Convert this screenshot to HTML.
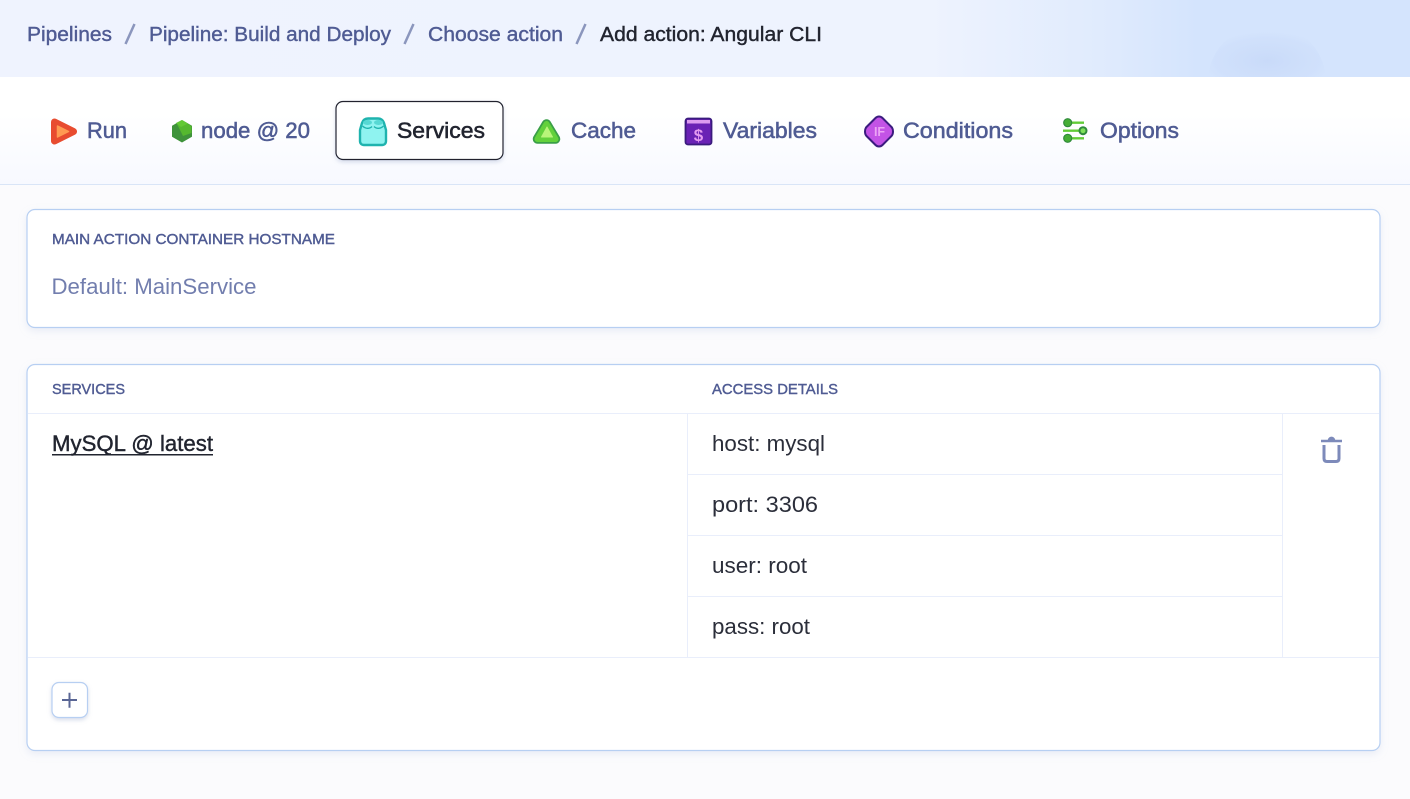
<!DOCTYPE html>
<html lang="en">
<head>
<meta charset="utf-8">
<title>Add action: Angular CLI</title>
<style>
html,body{margin:0;padding:0;width:1410px;height:799px;overflow:hidden;background:#fbfbfd}
svg{display:block}
text{font-family:"Liberation Sans",Arial,sans-serif}
.m{stroke-width:.4px;paint-order:stroke}
.nav{font-size:20.500px;fill:#4f5b93;stroke:#4f5b93}
.tab{font-size:22.500px;fill:#4f5b93;stroke:#4f5b93;stroke-width:.55px}
.cap{font-size:14.500px;fill:#4f5b93;stroke:#4f5b93}
.val{font-size:22px;fill:#2b2e3a}
</style>
</head>
<body>
<svg width="1410" height="799" viewBox="0 0 1410 799" xmlns="http://www.w3.org/2000/svg">
<defs>
<linearGradient id="hd" x1="0" y1="0" x2="1" y2="0">
<stop offset="0" stop-color="#eff3fe"/><stop offset=".66" stop-color="#eef3fe"/><stop offset=".78" stop-color="#e0ebfd"/><stop offset=".85" stop-color="#d4e4fd"/><stop offset="1" stop-color="#d4e4fd"/>
</linearGradient>
<linearGradient id="tb" x1="0" y1="0" x2="0" y2="1">
<stop offset="0" stop-color="#ffffff"/><stop offset=".35" stop-color="#ffffff"/><stop offset="1" stop-color="#f7f9ff"/>
</linearGradient>
<filter id="sh" x="-5%" y="-5%" width="110%" height="115%"><feDropShadow dx="0" dy="3" stdDeviation="4" flood-color="#a9b8dc" flood-opacity=".22"/></filter>
<filter id="sh2" x="-20%" y="-20%" width="140%" height="150%"><feDropShadow dx="0" dy="2" stdDeviation="2" flood-color="#8f9cc4" flood-opacity=".35"/></filter>
<radialGradient id="dot" cx=".5" cy=".7" r=".6"><stop offset="0" stop-color="#bfd2f5" stop-opacity=".55"/><stop offset=".75" stop-color="#c8d9f8" stop-opacity=".3"/><stop offset="1" stop-color="#d4e4fd" stop-opacity="0"/></radialGradient>
</defs>

<rect width="1410" height="799" fill="#fbfbfd"/>

<!-- breadcrumb header -->
<rect width="1410" height="77" fill="url(#hd)"/>
<path d="M1208 77C1212 42 1240 24 1268 24C1296 24 1322 44 1326 77Z" fill="url(#dot)"/>
<text x="27" y="41" class="nav m" textLength="85" lengthAdjust="spacingAndGlyphs">Pipelines</text>
<path d="M125.500 44L134.500 24" stroke="#8b96bd" stroke-width="2.500" fill="none"/>
<text x="149" y="41" class="nav m" textLength="242" lengthAdjust="spacingAndGlyphs">Pipeline: Build and Deploy</text>
<path d="M404.500 44L413.500 24" stroke="#8b96bd" stroke-width="2.500" fill="none"/>
<text x="428" y="41" class="nav m" textLength="135" lengthAdjust="spacingAndGlyphs">Choose action</text>
<path d="M576.500 44L585.500 24" stroke="#8b96bd" stroke-width="2.500" fill="none"/>
<text x="600" y="41" font-size="20.500" fill="#21242f" stroke="#21242f" class="m" textLength="222" lengthAdjust="spacingAndGlyphs">Add action: Angular CLI</text>

<!-- tabs -->
<rect y="77" width="1410" height="107" fill="url(#tb)"/>
<rect y="184" width="1410" height="1" fill="#d9e5f7"/>

<!-- Run -->
<path d="M54.500 122L73.500 131.500L54.500 141Z" fill="#e84c30" stroke="#e84c30" stroke-width="7" stroke-linejoin="round"/>
<path d="M57.500 126L68.500 131.500L57.500 137Z" fill="#ff9a52" stroke="#ff9a52" stroke-width="1.500" stroke-linejoin="round"/>
<text x="87" y="138" class="tab m" textLength="40" lengthAdjust="spacingAndGlyphs">Run</text>

<!-- node -->
<path d="M182 120.500L191.500 126V136.500L182 142L172.500 136.500V126Z" fill="#3f933b" stroke="#3f933b" stroke-width="1" stroke-linejoin="round"/>
<path d="M182 120.500L191.500 126V133L183 136L177 124Z" fill="#55b82f"/>
<path d="M176 123L182 120L188 123.500L181 127Z" fill="#62c934"/>
<text x="201" y="138" class="tab m" textLength="109" lengthAdjust="spacingAndGlyphs">node @ 20</text>

<!-- Services -->
<rect x="336" y="101.500" width="167" height="58" rx="7" fill="#fff" stroke="#21242f" stroke-width="1.200" filter="url(#sh2)"/>
<path d="M368 118.500H378C381 118.500 383 120 384 123L386 130V141C386 143.500 384.500 145 382 145H364C361.500 145 360 143.500 360 141V130L362 123C363 120 365 118.500 368 118.500Z" fill="#8ff3f0" stroke="#1fb3ae" stroke-width="2.400"/>
<ellipse cx="367.500" cy="122.500" rx="4.500" ry="2.500" fill="#57d8d4"/><ellipse cx="378.500" cy="122.500" rx="4.500" ry="2.500" fill="#57d8d4"/>
<path d="M362.500 126C365.500 129 369.500 129 372 126.500M374 126.500C376.500 129 380.500 129 383.500 126" stroke="#1fb3ae" stroke-width="1.300" fill="none"/>
<text x="397" y="138" font-size="22.500" fill="#21242f" stroke="#21242f" class="m" style="stroke-width:.55px" textLength="88" lengthAdjust="spacingAndGlyphs">Services</text>

<!-- Cache -->
<path d="M546.500 124L555.500 139H537.500Z" fill="#3a9f48" stroke="#3a9f48" stroke-width="9.500" stroke-linejoin="round"/>
<path d="M546.500 124L555.500 139H537.500Z" fill="#63d13c" stroke="#63d13c" stroke-width="6" stroke-linejoin="round"/>
<path d="M547 127L552.500 137H541.500Z" fill="#b9f57a" stroke="#b9f57a" stroke-width="1" stroke-linejoin="round"/>
<text x="571" y="138" class="tab m" textLength="65" lengthAdjust="spacingAndGlyphs">Cache</text>

<!-- Variables -->
<rect x="685.500" y="118.500" width="26" height="26" rx="2.500" fill="#6a22b5" stroke="#3a1b7d" stroke-width="1.800"/>
<rect x="687" y="120" width="23" height="3.500" fill="#dc9cf0"/>
<text x="698.500" y="141" font-size="17" font-weight="bold" fill="#e39af0" text-anchor="middle">$</text>
<text x="723" y="138" class="tab m" textLength="94" lengthAdjust="spacingAndGlyphs">Variables</text>

<!-- Conditions -->
<path d="M875.500 118C877.500 116 880.500 116 882.500 118L891.500 127C893.500 129 893.500 134 891.500 136L882.500 145C880.500 147 877.500 147 875.500 145L866.500 136C864.500 134 864.500 129 866.500 127Z" fill="#c353e6" stroke="#3b1c7f" stroke-width="2"/>
<text x="879.500" y="136" font-size="12.500" font-weight="bold" fill="#eca3f5" text-anchor="middle">IF</text>
<text x="903" y="138" class="tab m" textLength="110" lengthAdjust="spacingAndGlyphs">Conditions</text>

<!-- Options -->
<path d="M1071 122.700H1084M1063 130.700H1080M1071 138.300H1084" stroke="#62cc38" stroke-width="2.400" fill="none"/>
<circle cx="1067.700" cy="122.700" r="4" fill="#45ad35" stroke="#308a3c" stroke-width="1.200"/>
<circle cx="1083" cy="130.700" r="3.500" fill="#7ee05a" stroke="#308a3c" stroke-width="2"/>
<circle cx="1067.700" cy="138.300" r="4" fill="#45ad35" stroke="#308a3c" stroke-width="1.200"/>
<text x="1100" y="138" class="tab m" textLength="79" lengthAdjust="spacingAndGlyphs">Options</text>

<!-- Card 1 -->
<rect x="27" y="209.500" width="1353" height="118" rx="8" fill="#fff" stroke="#b7cff2" stroke-width="1.200" filter="url(#sh)"/>
<text x="52" y="244" class="cap m" textLength="283" lengthAdjust="spacingAndGlyphs">MAIN ACTION CONTAINER HOSTNAME</text>
<text x="51.500" y="294" font-size="22" fill="#727eae" textLength="205" lengthAdjust="spacingAndGlyphs">Default: MainService</text>

<!-- Card 2 -->
<rect x="27" y="364.500" width="1353" height="386" rx="8" fill="#fff" stroke="#b7cff2" stroke-width="1.200" filter="url(#sh)"/>
<text x="52" y="394" class="cap m" textLength="73" lengthAdjust="spacingAndGlyphs">SERVICES</text>
<text x="712" y="394" class="cap m" textLength="126" lengthAdjust="spacingAndGlyphs">ACCESS DETAILS</text>

<g fill="#e9eefb">
<rect x="28" y="413" width="1351" height="1"/>
<rect x="28" y="657" width="1351" height="1"/>
<rect x="687" y="414" width="1" height="243"/>
<rect x="1282" y="414" width="1" height="243"/>
<rect x="688" y="474" width="594" height="1"/>
<rect x="688" y="535" width="594" height="1"/>
<rect x="688" y="596" width="594" height="1"/>
</g>

<text x="52" y="451" font-size="22" fill="#21242f" stroke="#21242f" class="m" textLength="161" lengthAdjust="spacingAndGlyphs">MySQL @ latest</text>
<rect x="52" y="454" width="161" height="1.500" fill="#21242f"/>

<text x="712" y="451" class="val" textLength="113" lengthAdjust="spacingAndGlyphs">host: mysql</text>
<text x="712" y="512" class="val" textLength="106" lengthAdjust="spacingAndGlyphs">port: 3306</text>
<text x="712" y="573" class="val" textLength="95" lengthAdjust="spacingAndGlyphs">user: root</text>
<text x="712" y="634" class="val" textLength="98" lengthAdjust="spacingAndGlyphs">pass: root</text>

<!-- trash -->
<path d="M1321 441H1342" stroke="#7d8aba" stroke-width="2.600" fill="none"/>
<path d="M1328.500 440C1329 436.500 1334 436.500 1334.500 440Z" fill="#7d8aba" stroke="#7d8aba" stroke-width="1.500"/>
<path d="M1324 445V458.500C1324 460.500 1325 461.500 1327 461.500H1336C1338 461.500 1339 460.500 1339 458.500V445" stroke="#7d8aba" stroke-width="3" fill="none"/>

<!-- add button -->
<rect x="52" y="682.500" width="35.500" height="35" rx="7" fill="#fff" stroke="#b7cff2" stroke-width="1.200" filter="url(#sh2)"/>
<path d="M62 700H77M69.500 692.700V707.700" stroke="#5a6695" stroke-width="2" fill="none"/>
</svg>
</body>
</html>
